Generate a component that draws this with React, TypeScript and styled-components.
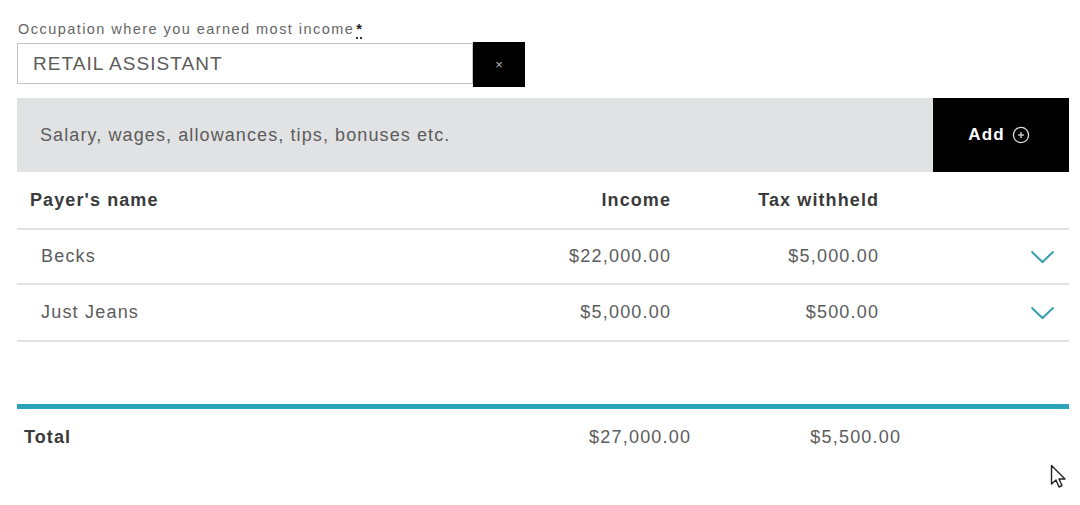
import React from "react";
import styled, { createGlobalStyle } from "styled-components";

const GlobalStyle = createGlobalStyle`
  html, body { margin: 0; padding: 0; background: #ffffff; }
  body { font-family: "Liberation Sans", Arial, sans-serif; color: #555; }
  * { box-sizing: border-box; }
`;

const Page = styled.div`
  position: relative;
  width: 1080px;
  height: 505px;
  padding: 20px 11px 0 17px;
  overflow: hidden;
`;

const Label = styled.div`
  font-size: 14.5px;
  line-height: 18px;
  color: #666;
  letter-spacing: 1.45px;
  padding-left: 1px;
`;

const Required = styled.abbr`
  text-decoration: none;
  border-bottom: 2px dotted #333;
  color: #222;
  font-weight: bold;
  margin-left: 2px;
  letter-spacing: 0;
`;

const InputRow = styled.div`
  display: flex;
  align-items: flex-start;
  margin-top: 5px;
`;

const TextInput = styled.div`
  width: 456px;
  height: 41px;
  border: 1px solid #c4c4c4;
  padding-left: 15px;
  display: flex;
  align-items: center;
  font-size: 19px;
  color: #5c5c5c;
  letter-spacing: 1.05px;
`;

const ClearButton = styled.button`
  width: 52px;
  height: 45px;
  margin-top: -1px;
  background: #000;
  border: none;
  color: #bbb;
  font-size: 13px;
  display: flex;
  align-items: center;
  justify-content: center;
  font-family: "Liberation Sans", Arial, sans-serif;
  padding: 0;
`;

const IncomeBar = styled.div`
  display: flex;
  height: 74px;
  margin-top: 11px;
  background: #e1e2e3;
`;

const BarText = styled.div`
  flex: 1;
  display: flex;
  align-items: center;
  padding-left: 23px;
  font-size: 18px;
  color: #5c5c5c;
  letter-spacing: 1.1px;
`;

const AddButton = styled.button`
  width: 136px;
  background: #000;
  border: none;
  color: #fff;
  font-family: "Liberation Sans", Arial, sans-serif;
  font-weight: bold;
  font-size: 17px;
  letter-spacing: 1.2px;
  display: flex;
  align-items: center;
  justify-content: center;
  gap: 7px;
  padding: 0 4px 0 0;
`;

const Row = styled.div<{ $cols: string; $h: number; $line?: boolean }>`
  display: grid;
  grid-template-columns: ${(p) => p.$cols};
  align-items: center;
  height: ${(p) => p.$h}px;
  border-bottom: ${(p) => (p.$line ? "2px solid #e2e2e2" : "none")};
`;

const Cell = styled.div<{ $right?: boolean; $bold?: boolean; $pad?: number }>`
  font-size: 18px;
  text-align: ${(p) => (p.$right ? "right" : "left")};
  font-weight: ${(p) => (p.$bold ? "bold" : "normal")};
  color: ${(p) => (p.$bold ? "#3a3a3a" : "#5c5c5c")};
  padding-left: ${(p) => p.$pad ?? 0}px;
  letter-spacing: ${(p) => (p.$bold ? "1.1px" : "1.2px")};
  margin-right: ${(p) => (p.$right ? (p.$bold ? "-1.1px" : "-1.2px") : "0")};
`;

const ChevronCell = styled.div`
  display: flex;
  justify-content: flex-end;
  padding-right: 14px;
`;

const Spacer = styled.div`
  height: 62px;
`;

const TealRule = styled.div`
  height: 5px;
  background: #2aa4b6;
`;

const Cursor = styled.svg`
  position: absolute;
  left: 1050px;
  top: 464px;
`;

const COLS = "1fr 150px 208px 191px";
const TOTAL_COLS = "1fr 170px 210px 169px";

const Chevron = () => (
  <svg width="26" height="14" viewBox="0 0 26 14">
    <polyline points="2.5,1.5 13.5,12 24.5,1.5" fill="none" stroke="#3aa0ae" strokeWidth="2" />
  </svg>
);

const AddIcon = () => (
  <svg width="18" height="18" viewBox="0 0 18 18">
    <circle cx="9" cy="9" r="7.6" fill="none" stroke="#ddd" strokeWidth="1.3" />
    <line x1="6" y1="9" x2="12" y2="9" stroke="#ddd" strokeWidth="1.3" />
    <line x1="9" y1="6" x2="9" y2="12" stroke="#ddd" strokeWidth="1.3" />
  </svg>
);

const rows = [
  { name: "Becks", income: "$22,000.00", tax: "$5,000.00", h: 55 },
  { name: "Just Jeans", income: "$5,000.00", tax: "$500.00", h: 57 },
];

export default function App() {
  return (
    <>
      <GlobalStyle />
      <Page>
        <Label>
          Occupation where you earned most income<Required title="required">*</Required>
        </Label>
        <InputRow>
          <TextInput>RETAIL ASSISTANT</TextInput>
          <ClearButton aria-label="Clear">×</ClearButton>
        </InputRow>
        <IncomeBar>
          <BarText>Salary, wages, allowances, tips, bonuses etc.</BarText>
          <AddButton>
            Add <AddIcon />
          </AddButton>
        </IncomeBar>
        <Row $cols={COLS} $h={58} $line>
          <Cell $bold $pad={13}>Payer's name</Cell>
          <Cell $bold $right>Income</Cell>
          <Cell $bold $right>Tax withheld</Cell>
          <div />
        </Row>
        {rows.map((r) => (
          <Row key={r.name} $cols={COLS} $h={r.h} $line>
            <Cell $pad={24}>{r.name}</Cell>
            <Cell $right>{r.income}</Cell>
            <Cell $right>{r.tax}</Cell>
            <ChevronCell>
              <Chevron />
            </ChevronCell>
          </Row>
        ))}
        <Spacer />
        <TealRule />
        <Row $cols={TOTAL_COLS} $h={56}>
          <Cell $bold $pad={7}>Total</Cell>
          <Cell $right>$27,000.00</Cell>
          <Cell $right>$5,500.00</Cell>
          <div />
        </Row>
        <Cursor width="20" height="28" viewBox="0 0 20 28">
          <path
            d="M1.5 1.5 L1.5 20 L6 16 L9 23 L12 21.5 L9 15 L15 15 Z"
            fill="#fff"
            stroke="#222"
            strokeWidth="1.4"
            strokeLinejoin="round"
          />
        </Cursor>
      </Page>
    </>
  );
}
